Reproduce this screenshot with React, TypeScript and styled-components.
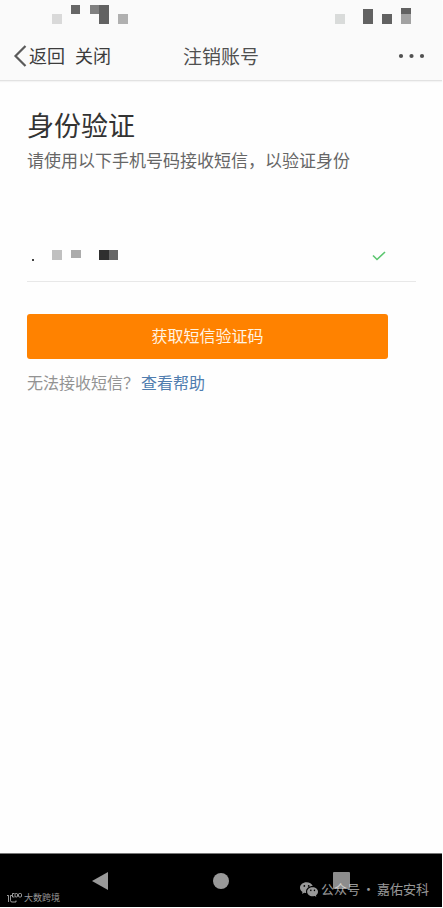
import React from 'react';
import styled, { createGlobalStyle } from 'styled-components';
import { BsWechat } from 'react-icons/bs';

const GlobalStyle = createGlobalStyle`
  * { box-sizing: border-box; }
  body {
    margin: 0;
    background: #fefefe;
    font-family: Roboto, "Noto Sans CJK SC", sans-serif;
  }
  button { font-family: inherit; border: 0; padding: 0; background: none; cursor: pointer; }
`;

const Screen = styled.div`
  min-height: 100vh;
  display: flex;
  flex-direction: column;
  border: solid #fefefe;
  border-width: 0 1px 1px 0;
  background: #fefefe;
`;

const Header = styled.header`
  background: #fafafa;
  border-bottom: 1px solid #e2e2e2;
  box-shadow: 0 1px 1px #f4f4f4;
`;

const StatusBar = styled.div`
  display: flex;
  justify-content: space-between;
  height: 32px;
  padding: 5px 31px 0 52px;
`;

const NavBar = styled.nav`
  display: grid;
  grid-template-columns: 1fr auto 1fr;
  align-items: center;
  height: 48px;
  padding: 0 13px;
`;

const NavActions = styled.div`
  display: flex;
  align-items: center;
  gap: 10px;
`;

const NavButton = styled.button`
  display: flex;
  align-items: center;
  gap: 2px;
  font-size: 18px;
  line-height: 26px;
  color: #3c3c3c;
`;

const MoreButton = styled(NavButton)`
  justify-self: end;
`;

const NavLabel = styled.span`
  padding-top: 2px;
`;

const NavTitle = styled.h1`
  margin: 0;
  padding-top: 3px;
  font-size: 19px;
  line-height: 26px;
  font-weight: 400;
  color: #505050;
`;

const Main = styled.main`
  flex: 1;
  padding: 26px 26px 24px 27px;
`;

const Heading = styled.h2`
  margin: 0;
  font-size: 27px;
  line-height: 40px;
  font-weight: 400;
  color: #333;
`;

const Description = styled.p`
  margin: 2px 0 0;
  font-size: 17px;
  line-height: 24px;
  color: #666;
`;

const PhoneRow = styled.div`
  display: flex;
  align-items: center;
  justify-content: space-between;
  height: 53px;
  margin-top: 56px;
  padding: 2px 30px 0 4px;
  border-bottom: 1px solid #e8e8e8;
`;

const SubmitButton = styled.button`
  display: block;
  width: calc(100% - 28px);
  height: 45px;
  margin-top: 32px;
  border-radius: 3px;
  background: #ff8200;
  color: #fff3e2;
  font-size: 16px;
  line-height: 24px;
`;

const Help = styled.p`
  display: flex;
  gap: 2px;
  margin: 13px 0 0;
  font-size: 16px;
  line-height: 24px;
  color: #939393;
`;

const HelpLink = styled.a`
  color: #507daf;
  text-decoration: none;
`;

const SystemBar = styled.footer`
  position: relative;
  display: grid;
  grid-template-columns: repeat(3, 1fr);
  height: 54px;
  padding: 0 40px;
  border-top: 1px solid #777;
  background: #000;
`;

const SystemKey = styled.button`
  display: flex;
  align-items: center;
  justify-content: center;
`;

const Watermark = styled.div`
  position: absolute;
  display: flex;
  align-items: center;
  color: rgba(255, 255, 255, 0.6);
  font-family: "Noto Sans CJK SC", sans-serif;
  pointer-events: none;
`;

const SiteMark = styled(Watermark)`
  bottom: 3px;
  left: 7px;
  gap: 2px;
  font-size: 9px;
  line-height: 12px;
`;

const AccountMark = styled(Watermark)`
  bottom: 8px;
  right: 13px;
  gap: 3px;
  font-size: 13px;
  line-height: 20px;
`;

const AccountText = styled.span`
  display: flex;
  gap: 2px;
`;

type Block = [x: number, y: number, w: number, h: number, fill: string];

const Mosaic = ({ width, height, blocks }: { width: number; height: number; blocks: Block[] }) => (
  <svg width={width} height={height} aria-hidden="true">
    {blocks.map(([x, y, w, h, fill]) => (
      <rect key={`${x}-${y}`} x={x} y={y} width={w} height={h} fill={fill} />
    ))}
  </svg>
);

const statusLeft: Block[] = [
  [0, 9, 10, 10, '#d9d9d9'],
  [19, 0, 9, 9, '#666'],
  [38, 0, 9, 9, '#808080'],
  [47, 0, 10, 19, '#626262'],
  [66, 9, 10, 10, '#b0b0b0'],
];

const statusRight: Block[] = [
  [0, 9, 10, 10, '#d9dbda'],
  [28, 4, 10, 15, '#626262'],
  [47, 9, 10, 10, '#626262'],
  [66, 3, 10, 6, '#626262'],
  [66, 9, 10, 10, '#a2a2a2'],
];

const phoneBlocks: Block[] = [
  [1, 9, 2, 2, '#444'],
  [21, 0, 10, 10, '#c0c0c0'],
  [40, 0, 10, 8, '#ababab'],
  [68, 0, 10, 10, '#2f2f2f'],
  [78, 0, 9, 10, '#676767'],
];

export default function App() {
  return (
    <Screen>
      <GlobalStyle />
      <Header>
        <StatusBar>
          <Mosaic width={76} height={19} blocks={statusLeft} />
          <Mosaic width={76} height={19} blocks={statusRight} />
        </StatusBar>
        <NavBar>
          <NavActions>
            <NavButton type="button">
              <svg width="14" height="22" viewBox="0 0 14 22" fill="none" stroke="#5a5a5a" strokeWidth="2.2" aria-hidden="true">
                <path d="M12.500 1 2.500 11l10 10" />
              </svg>
              <NavLabel>返回</NavLabel>
            </NavButton>
            <NavButton type="button">
              <NavLabel>关闭</NavLabel>
            </NavButton>
          </NavActions>
          <NavTitle>注销账号</NavTitle>
          <MoreButton type="button" aria-label="更多">
            <svg width="32" height="6" viewBox="0 0 32 6" fill="#505050" aria-hidden="true">
              <circle cx="4" cy="3" r="2.100" />
              <circle cx="14.500" cy="3" r="2.100" />
              <circle cx="25" cy="3" r="2.100" />
            </svg>
          </MoreButton>
        </NavBar>
      </Header>
      <Main>
        <Heading>身份验证</Heading>
        <Description>请使用以下手机号码接收短信，以验证身份</Description>
        <PhoneRow>
          <Mosaic width={87} height={12} blocks={phoneBlocks} />
          <svg width="14" height="10" viewBox="0 0 14 10" fill="none" stroke="#5bc66f" strokeWidth="1.6" aria-hidden="true">
            <path d="M1 4.500 5 8.500 13 1" />
          </svg>
        </PhoneRow>
        <SubmitButton type="button">获取短信验证码</SubmitButton>
        <Help>
          <span>无法接收短信？</span>
          <HelpLink href="#help">查看帮助</HelpLink>
        </Help>
      </Main>
      <SystemBar>
        <SystemKey type="button" aria-label="返回">
          <svg width="16" height="18" viewBox="0 0 16 18" fill="#999" aria-hidden="true">
            <path d="M0 9 16 0v18z" />
          </svg>
        </SystemKey>
        <SystemKey type="button" aria-label="主屏幕">
          <svg width="16" height="16" viewBox="0 0 16 16" fill="#999" aria-hidden="true">
            <circle cx="8" cy="8" r="8" />
          </svg>
        </SystemKey>
        <SystemKey type="button" aria-label="最近任务">
          <svg width="17" height="17" viewBox="0 0 17 17" fill="#8c8c8c" aria-hidden="true">
            <rect width="17" height="17" rx="1" />
          </svg>
        </SystemKey>
        <SiteMark>
          <svg width="15" height="10" viewBox="0 0 15 10" fill="none" stroke="currentColor" strokeWidth="1" aria-hidden="true">
            <path d="M0 2.500h1.500V9M5 2.500H3.500v5Q3.500 9 5 9H9V7.500M7.500.5h-2v3.500h2" />
            <rect x="8" y=".5" width="2.500" height="3.500" rx="1" />
            <rect x="11.500" y=".5" width="3" height="3.500" rx="1" />
          </svg>
          <span>大数跨境</span>
        </SiteMark>
        <AccountMark>
          <BsWechat size={18} aria-hidden="true" />
          <AccountText>
            <span>公众号</span>
            <span>·</span>
            <span>嘉佑安科</span>
          </AccountText>
        </AccountMark>
      </SystemBar>
    </Screen>
  );
}
